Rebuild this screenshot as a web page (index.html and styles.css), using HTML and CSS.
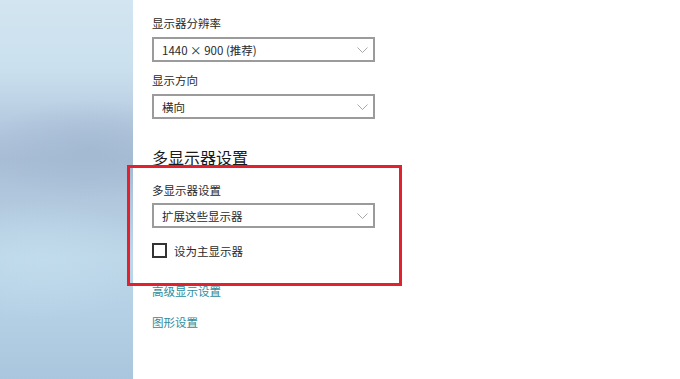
FILE: index.html
```html
<!DOCTYPE html>
<html lang="zh-CN">
<head>
<meta charset="utf-8">
<title>显示设置</title>
<link rel="stylesheet" href="styles.css">
</head>
<body>
<div class="page">
  <aside class="sidebar"></aside>
  <main class="main">
    <div class="label first">显示器分辨率</div>
    <div class="select"><span>1440 × 900 (推荐)</span><svg class="chev" width="11" height="6" viewBox="0 0 11 6"><path d="M0.5 0.5 L5.5 5.5 L10.5 0.5" fill="none" stroke="#a8a8a8" stroke-width="1"/></svg></div>
    <div class="label">显示方向</div>
    <div class="select"><span>横向</span><svg class="chev" width="11" height="6" viewBox="0 0 11 6"><path d="M0.5 0.5 L5.5 5.5 L10.5 0.5" fill="none" stroke="#a8a8a8" stroke-width="1"/></svg></div>
    <h2 class="heading">多显示器设置</h2>
    <div class="label label3">多显示器设置</div>
    <div class="select"><span>扩展这些显示器</span><svg class="chev" width="11" height="6" viewBox="0 0 11 6"><path d="M0.5 0.5 L5.5 5.5 L10.5 0.5" fill="none" stroke="#a8a8a8" stroke-width="1"/></svg></div>
    <label class="check"><span class="box"></span><span>设为主显示器</span></label>
    <a class="link link1" href="#">高级显示设置</a>
    <a class="link link2" href="#">图形设置</a>
  </main>
  <div class="highlight"></div>
</div>
</body>
</html>
```
FILE: styles.css
```css
* { box-sizing: border-box; }
html, body { margin: 0; padding: 0; }
body {
  width: 680px;
  height: 379px;
  overflow: hidden;
  background: #fff;
  font-family: "Noto Sans CJK SC", "Noto Sans", sans-serif;
  color: #2a2a2a;
}
.page {
  position: relative;
  display: flex;
  height: 379px;
}
.sidebar {
  width: 133px;
  flex: none;
  background:
    radial-gradient(ellipse 120px 60px at 40px 260px, rgba(195,222,238,0.7), rgba(195,222,238,0) 100%),
    radial-gradient(ellipse 110px 50px at 90px 150px, rgba(160,182,208,0.7), rgba(160,182,208,0) 100%),
    linear-gradient(180deg, #d2e5f0 0%, #cbe0ee 18%, #b6cbe0 32%, #a9bed6 42%, #b2c9de 55%, #bcd6e8 68%, #b3cfe4 85%, #a9c6de 100%);
}
.main {
  flex: 1;
  padding: 15px 0 0 19px;
  display: flex;
  flex-direction: column;
  align-items: flex-start;
}
.label {
  font-size: 11.5px;
  line-height: 16px;
  height: 16px;
  margin-top: 10px;
  color: #2a2a2a;
}
.label.first { margin-top: 0; }
.label.label3 { margin-top: 14px; }
.select {
  margin-top: 6px;
  width: 223px;
  height: 25px;
  border: 2px solid #9b9b9b;
  display: flex;
  align-items: center;
  justify-content: space-between;
  padding: 0 5px 0 8px;
  font-size: 11.5px;
  color: #2a2a2a;
}
.label3 + .select { margin-top: 5px; }
.chev { flex: none; }
.heading {
  margin: 27px 0 0;
  font-size: 16px;
  font-weight: normal;
  line-height: 22px;
  height: 22px;
  color: #1a1a1a;
}
.check {
  margin-top: 15px;
  display: flex;
  align-items: center;
  gap: 7px;
  font-size: 11.5px;
  height: 15px;
  color: #2a2a2a;
}
.box {
  width: 15px;
  height: 15px;
  border: 2px solid #333;
  background: #fff;
}
.link {
  font-size: 11.5px;
  line-height: 16px;
  color: #2f8b9b;
  text-decoration: none;
}
.link1 { margin-top: 25px; }
.link2 { margin-top: 15px; }
.highlight {
  position: absolute;
  left: 127px;
  top: 165px;
  width: 275px;
  height: 121px;
  border: 3px solid #e1212e;
}
```
